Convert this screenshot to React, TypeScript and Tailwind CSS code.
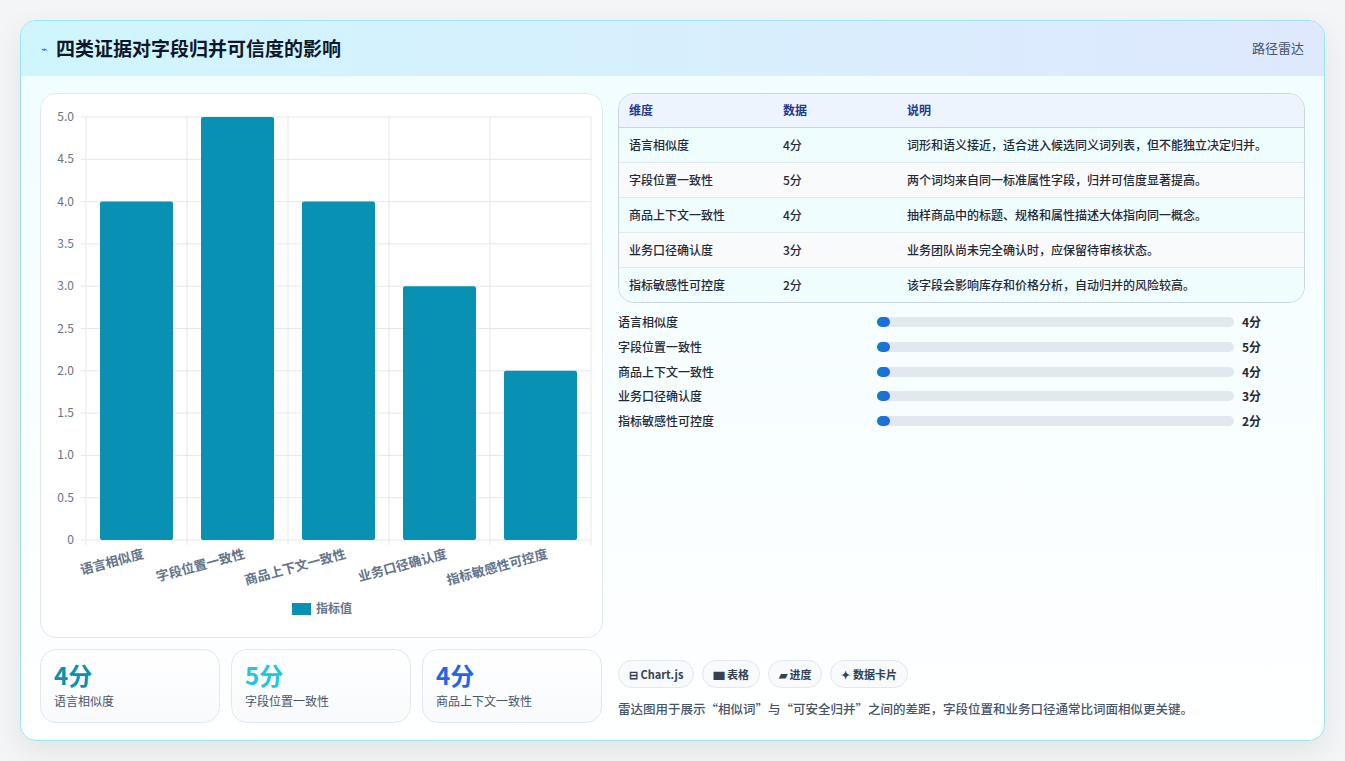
import React from "react";

const rows = [
  ["语言相似度", 4, "词形和语义接近，适合进入候选同义词列表，但不能独立决定归并。"],
  ["字段位置一致性", 5, "两个词均来自同一标准属性字段，归并可信度显著提高。"],
  ["商品上下文一致性", 4, "抽样商品中的标题、规格和属性描述大体指向同一概念。"],
  ["业务口径确认度", 3, "业务团队尚未完全确认时，应保留待审核状态。"],
  ["指标敏感性可控度", 2, "该字段会影响库存和价格分析，自动归并的风险较高。"],
] as const;

function Chart() {
  const L = 45, R = 550, T = 23, B = 446;
  const h = (B - T) / 5;
  const bw = (R - L) / 5;
  return (
    <svg width="560" height="542" className="block">
      {[0, 1, 2, 3, 4, 5, 6, 7, 8, 9, 10].map((i) => {
        const y = B - (i * h) / 2;
        return (
          <g key={i}>
            <line x1={L - 5} x2={R} y1={y} y2={y} stroke="#e5e7eb" />
            <text x={33} y={y + 4} textAnchor="end" fontSize="12" fill="#6b7280">
              {i === 0 ? "0" : (i / 2).toFixed(1)}
            </text>
          </g>
        );
      })}
      {[0, 1, 2, 3, 4, 5].map((i) => (
        <line key={i} x1={L + i * bw} x2={L + i * bw} y1={T} y2={B + 5} stroke="#e5e7eb" />
      ))}
      {rows.map((r, i) => {
        const cx = L + bw * (i + 0.5);
        const top = B - r[1] * h;
        return (
          <g key={i}>
            <rect x={cx - 36.5} y={top} width={73} height={B - top} rx={2} fill="#0891b2" />
            <text
              x={cx + 8}
              y={B + 18}
              textAnchor="end"
              fontSize="13"
              fontWeight="600"
              fill="#64748b"
              transform={`rotate(-15 ${cx + 8} ${B + 18})`}
            >
              {r[0]}
            </text>
          </g>
        );
      })}
      <rect x={251} y={509} width={19} height={12} fill="#0891b2" />
      <text x={275} y={519} fontSize="12" fill="#64748b" fontWeight="600">指标值</text>
    </svg>
  );
}

export default function App() {
  return (
    <div className="w-[1345px] h-[761px] bg-[#f4f5f7] pt-5 px-5" style={{ fontFamily: '"Noto Sans CJK SC", "Noto Sans", sans-serif' }}>
      <div className="w-[1305px] h-[721px] rounded-2xl border border-[#99e4ee] bg-gradient-to-b from-[#f0fdff] to-white overflow-hidden shadow-[0_10px_30px_rgba(0,0,0,0.08)] flex flex-col">
        <div className="h-[55px] shrink-0 flex items-center justify-between px-5 bg-gradient-to-r from-[#cff6fd] to-[#dfe8fd] border-b border-[#d9eef5]">
          <div className="flex items-center gap-2">
            <span className="text-[11px] text-[#2563eb]">⌁</span>
            <span className="text-[19px] font-bold text-[#0f172a]">四类证据对字段归并可信度的影响</span>
          </div>
          <span className="text-[13px] text-[#475569]">路径雷达</span>
        </div>
        <div className="flex-1 flex gap-[15px] pt-[17px] px-[19px]">
          <div className="w-[563px] flex flex-col gap-[11px]">
            <div className="h-[545px] rounded-2xl border border-[#e2e8f0] bg-white overflow-hidden">
              <Chart />
            </div>
            <div className="flex gap-[11px]">
              {[
                ["4分", "语言相似度", "text-[#0891b2]"],
                ["5分", "字段位置一致性", "text-[#22c5e0]"],
                ["4分", "商品上下文一致性", "text-[#2563eb]"],
              ].map(([v, l, c]) => (
                <div key={l} className="w-[180px] h-[74px] rounded-2xl border border-[#e2e8f0] bg-gradient-to-b from-white to-[#f8fafc] px-[13px] pt-[10px]">
                  <div className={`text-[24px] font-bold leading-[30px] ${c}`}>{v}</div>
                  <div className="text-[12px] text-[#475569] mt-[2px]">{l}</div>
                </div>
              ))}
            </div>
          </div>
          <div className="flex-1 flex flex-col">
            <div className="rounded-2xl border border-[#cbd5e1] overflow-hidden">
              <table className="w-full text-[12px] border-collapse">
                <thead>
                  <tr className="h-[33px] bg-[#eef4fe] text-[#1e3a8a] font-semibold border-b border-[#cbd5e1]">
                    <td className="pl-[10px] w-[164px]">维度</td>
                    <td className="w-[124px]">数据</td>
                    <td>说明</td>
                  </tr>
                </thead>
                <tbody>
                  {rows.map((r, i) => (
                    <tr key={i} className={`h-[35px] text-[#1f2937] font-medium ${i % 2 ? "bg-[#f8fafc]" : "bg-[#f0fdff]"} ${i < 4 ? "border-b border-[#e2e8f0]" : ""}`}>
                      <td className="pl-[10px]">{r[0]}</td>
                      <td>{r[1]}分</td>
                      <td>{r[2]}</td>
                    </tr>
                  ))}
                </tbody>
              </table>
            </div>
            <div className="flex flex-col mt-[7px]">
              {rows.map((r, i) => (
                <div key={i} className="h-[24.7px] flex items-center text-[12px] font-medium text-[#1f2937]">
                  <span className="w-[259px]">{r[0]}</span>
                  <div className="w-[357px] h-[10px] rounded-full bg-[#e2e8f0]">
                    <div className="w-[13px] h-[10px] rounded-full bg-gradient-to-r from-[#0e7fc6] to-[#2563eb]" />
                  </div>
                  <span className="ml-[8px] font-bold">{r[1]}分</span>
                </div>
              ))}
            </div>
            <div className="flex-1" />
            <div className="flex gap-[8px] mt-auto">
              {["⊟ Chart.js", "▆ 表格", "▰ 进度", "✦ 数据卡片"].map((t) => (
                <span key={t} className="h-[28px] px-[10px] rounded-full border border-[#e2e8f0] bg-[#f8fafc] text-[11px] font-semibold text-[#334155] flex items-center">{t}</span>
              ))}
            </div>
            <div className="text-[12.5px] text-[#475569] mt-[12px] mb-[21px] font-medium">雷达图用于展示“相似词”与“可安全归并”之间的差距，字段位置和业务口径通常比词面相似更关键。</div>
          </div>
        </div>
      </div>
    </div>
  );
}
